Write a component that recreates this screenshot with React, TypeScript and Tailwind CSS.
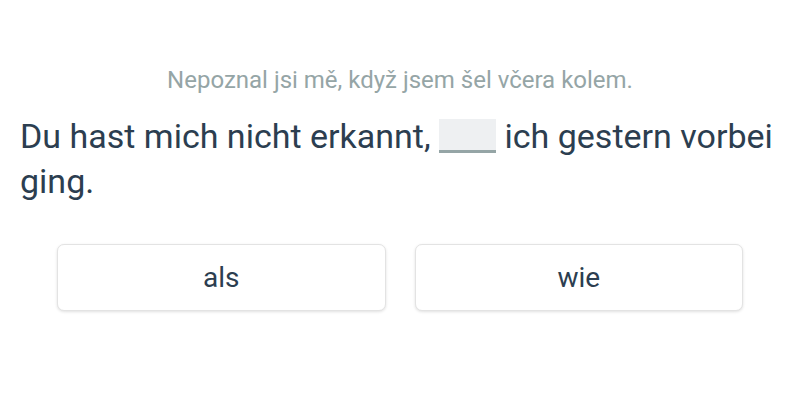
const options = ["als", "wie"];

export default function App() {
  return (
    <div className="flex h-[400px] w-[800px] flex-col bg-white font-['Roboto',sans-serif] text-[#2c3e50]">
      <p className="mt-[64px] text-center text-[24px] leading-[32px] text-[#95a5a6]">
        Nepoznal jsi mě, když jsem šel včera kolem.
      </p>
      <p className="mt-[18px] px-[20px] text-[34px] leading-[45px]">
        Du hast mich nicht erkannt,{" "}
        <span className="inline-block h-[34px] w-[57px] translate-y-[5px] border-b-[3px] border-[#95a5a6] bg-[#eef0f2] align-baseline" />{" "}
        ich gestern vorbei ging.
      </p>
      <div className="mx-auto mt-[40px] grid w-[686px] grid-cols-2 gap-[29px]">
        {options.map((o) => (
          <button
            key={o}
            className="h-[67px] rounded-[7px] border border-[#e3e3e3] bg-white text-[28px] text-[#2c3e50] shadow-[0_1px_3px_rgba(0,0,0,0.12)]"
          >
            {o}
          </button>
        ))}
      </div>
    </div>
  );
}
